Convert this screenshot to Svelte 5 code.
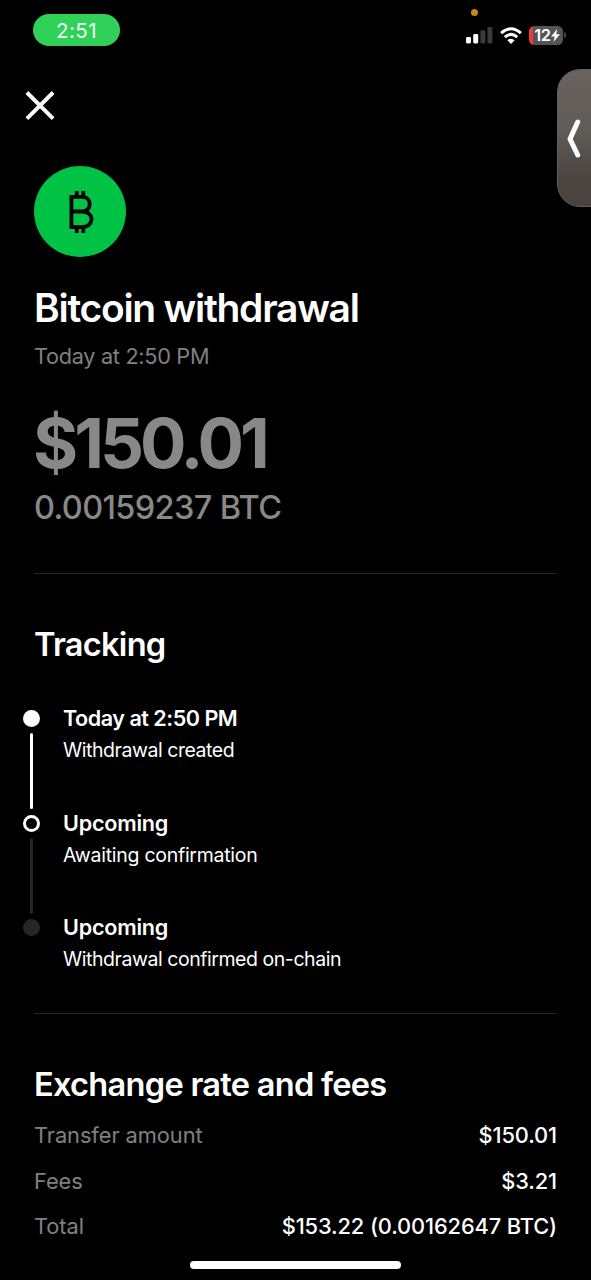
<script>
  const steps = [
    { title: 'Today at 2:50 PM', text: 'Withdrawal created', state: 'done' },
    { title: 'Upcoming', text: 'Awaiting confirmation', state: 'next' },
    { title: 'Upcoming', text: 'Withdrawal confirmed on-chain', state: 'idle' }
  ];
  const fees = [
    { label: 'Transfer amount', value: '$150.01' },
    { label: 'Fees', value: '$3.21' },
    { label: 'Total', value: '$153.22 (0.00162647 BTC)' }
  ];
</script>

<div class="screen">
  <header class="status">
    <span class="time">2:51</span>
    <div class="indicators">
      <span class="mic"></span>
      <svg class="signal" width="27" height="18" viewBox="0 0 27 18">
        <rect x="0" y="11" width="5" height="6.5" rx="1.4" fill="#fff" />
        <rect x="7.2" y="8" width="5" height="9.5" rx="1.4" fill="#fff" />
        <rect x="14.4" y="4.2" width="5" height="13.3" rx="1.4" fill="#3a3a3b" />
        <rect x="21.4" y="1" width="5" height="16.5" rx="1.4" fill="#3a3a3b" />
      </svg>
      <svg class="wifi" width="22" height="17" viewBox="0 0 22 17" fill="none" stroke="#fff" stroke-width="3">
        <path d="M1.1 6.1 Q11 -2.7 20.9 6.1" />
        <path d="M4.8 10.2 Q11 4.6 17.2 10.2" />
        <path d="M11 17 L7.4 13.2 Q11 10.1 14.6 13.2 Z" fill="#fff" stroke="none" />
      </svg>
      <div class="battery">
        <span class="level">12</span>
        <svg width="9" height="13" viewBox="0 0 9 13"><path d="M6.2 0 L0 7.5 H3.6 L2.5 13 L9 5.3 H5.3 Z" fill="#fff" /></svg>
      </div>
      <span class="nub"></span>
    </div>
  </header>

  <button class="close" aria-label="Close">
    <svg width="30" height="30" viewBox="0 0 30 30" stroke="#fff" stroke-width="3.9"><path d="M1.9 1.5 L28.1 27.7 M28.1 1.5 L1.9 27.7" /></svg>
  </button>

  <div class="drawer">
    <svg width="14" height="40" viewBox="0 0 14 40" fill="none" stroke="#fff" stroke-width="5" stroke-linecap="round" stroke-linejoin="round"><path d="M10.7 3 L3 20 L10.7 36" /></svg>
  </div>

  <main>
    <div class="coin">
      <svg width="26" height="44" viewBox="0 0 26 44" fill="none" stroke="#000" stroke-width="3.8">
        <path d="M3.4 6.9 H14 C24.3 6.9 24.3 21.5 14 21.5 H3.4 M14 21.5 C26.7 21.5 26.7 37.1 14 37.1 H3.4 M3.4 5 V39" />
        <path d="M8.8 1 V7 M15.3 1 V7 M8.8 37 V43 M15.3 37 V43" />
      </svg>
    </div>
    <h1>Bitcoin withdrawal</h1>
    <p class="when">Today at 2:50 PM</p>
    <p class="amount">$150.01</p>
    <p class="btc">0.00159237 BTC</p>

    <section class="tracking">
      <h2>Tracking</h2>
      <ol>
        {#each steps as step}
          <li class={step.state}>
            <div class="rail"><span class="dot"></span><span class="line"></span></div>
            <div class="copy">
              <h3>{step.title}</h3>
              <p>{step.text}</p>
            </div>
          </li>
        {/each}
      </ol>
    </section>

    <section class="fees">
      <h2>Exchange rate and fees</h2>
      <dl>
        {#each fees as fee}
          <div class="row"><dt>{fee.label}</dt><dd>{fee.value}</dd></div>
        {/each}
      </dl>
    </section>
  </main>
  <div class="home"></div>
</div>

<style>
  :global(body) { margin: 0; background: #000; }
  .screen {
    position: relative;
    box-sizing: border-box;
    width: 591px;
    height: 1280px;
    overflow: hidden;
    background: #000;
    color: #fff;
    font-family: Inter, "Liberation Sans", sans-serif;
    font-feature-settings: "calt" 0;
  }
  h1, h2, h3, p, ol, dl, dt, dd { margin: 0; padding: 0; white-space: nowrap; }
  .status { display: flex; justify-content: space-between; height: 76px; padding: 14px 25px 0 33px; box-sizing: border-box; }
  .time {
    width: 87px; height: 32px; border-radius: 16px; background: #30d158;
    font-size: 20.5px; line-height: 33px; text-align: center; letter-spacing: 0.5px; color: #effff2;
  }
  .indicators { position: relative; display: flex; align-items: center; height: 24px; margin-top: 9px; }
  .mic { position: absolute; left: 5px; top: -14px; width: 7px; height: 7px; border-radius: 50%; background: #c9851c; }
  .wifi { margin-left: 7px; }
  .battery {
    display: flex; align-items: center; justify-content: center; gap: 0; box-sizing: border-box;
    width: 34px; height: 19px; margin-left: 7px; padding-left: 2px; border-radius: 5.5px;
    background: linear-gradient(90deg, #f0392f 4.5px, #555456 4.5px);
  }
  .level { font-size: 16.5px; font-weight: 600; line-height: 19px; letter-spacing: -0.5px; }
  .nub { width: 2px; height: 6px; margin-left: 1px; border-radius: 0 3px 3px 0; background: #454545; }
  .close { display: block; width: 30px; height: 30px; margin: 15px 0 0 25px; padding: 0; border: 0; background: none; }
  .close svg, .coin svg, .drawer svg { display: block; }
  .drawer {
    position: absolute; left: 557px; top: 69px; width: 60px; height: 138px; box-sizing: border-box;
    padding: 49px 0 0 9px; border-radius: 23px;
    background: linear-gradient(180deg, #69635f 0%, #625c58 45%, #4a4441 80%, #49413f 100%);
    border: 1px solid #625d5a;
  }
  main { padding: 45px 34px 0; }
  .coin { display: flex; align-items: center; justify-content: center; box-sizing: border-box; width: 92px; height: 91px; padding-left: 2px; border-radius: 50%; background: #00c244; }
  h1 { margin-top: 26px; font-size: 39px; line-height: 50px; font-weight: 600; letter-spacing: -1.27px; }
  .when { margin-top: 8px; font-size: 21.7px; line-height: 30px; letter-spacing: -0.3px; color: #808080; }
  .amount { margin: 32px 0 0 -1px; font-size: 69px; line-height: 80px; font-weight: 700; letter-spacing: -4px; color: #888; }
  .btc { margin-top: 5px; font-size: 32.5px; line-height: 40px; font-weight: 500; letter-spacing: -0.64px; color: #888; }
  .tracking { margin-top: 45px; border-top: 1px solid #272727; padding-top: 50px; }
  h2 { font-size: 32.6px; line-height: 40px; font-weight: 600; letter-spacing: -0.73px; }
  ol { list-style: none; margin: 38px 0 0 -11px; }
  li { display: flex; height: 104.7px; }
  li:last-child { height: 101.6px; }
  .rail { display: flex; flex-direction: column; align-items: center; width: 17px; padding-top: 8px; }
  .dot { flex: none; box-sizing: border-box; width: 17px; height: 17px; border-radius: 50%; background: #fff; }
  .line { flex: none; width: 3px; height: 76px; margin-top: 6px; border-radius: 2px; background: #fff; }
  .next .dot { background: #000; border: 3px solid #fff; }
  .next .line, .idle .dot { background: #262626; }
  .idle .line { display: none; }
  .copy { padding-left: 23px; }
  h3 { font-size: 21.6px; line-height: 32px; font-weight: 600; letter-spacing: -0.22px; }
  .done h3 { letter-spacing: -0.5px; }
  .copy p { margin-top: 1px; font-size: 19.5px; line-height: 30px; letter-spacing: -0.45px; }
  .next .copy p { letter-spacing: -0.27px; }
  .fees { border-top: 1px solid #272727; padding-top: 50px; }
  dl { margin-top: 9px; }
  .row { display: flex; justify-content: space-between; font-size: 21.8px; line-height: 45.6px; }
  dt { color: #808080; letter-spacing: -0.06px; }
  dd { font-weight: 500; letter-spacing: -0.11px; }
  .home { position: absolute; left: 190px; top: 1261px; width: 211px; height: 8px; border-radius: 4px; background: #fff; }
</style>
